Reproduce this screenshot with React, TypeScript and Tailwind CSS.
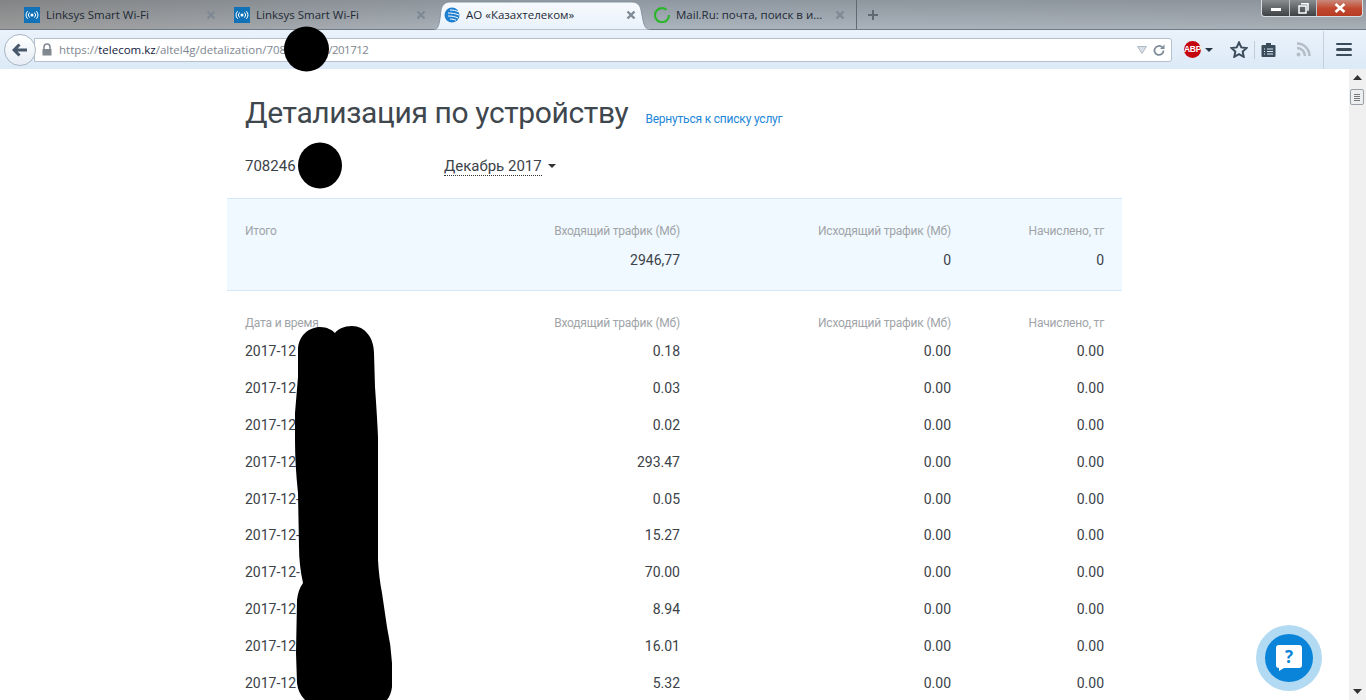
import React from "react";

const X = () => (
  <svg width="10" height="10" viewBox="0 0 10 10" className="shrink-0"><path d="M1.500 1.500l7 7M8.500 1.500l-7 7" stroke="#7f8a96" strokeWidth="2.400" /></svg>
);
const Wifi = () => (
  <svg width="16" height="16" viewBox="0 0 16 16" className="shrink-0">
    <rect width="16" height="16" fill="#1272b8" />
    <circle cx="8" cy="8" r="1.500" fill="#fff" />
    <path d="M5.500 5.500a3.600 3.600 0 0 0 0 5M10.500 5.500a3.600 3.600 0 0 1 0 5M3.600 4.200a6 6 0 0 0 0 7.600M12.400 4.200a6 6 0 0 1 0 7.600" stroke="#fff" fill="none" strokeWidth="1" />
  </svg>
);

function Tab({ icon, title, active, last }: { icon: React.ReactNode; title: string; active?: boolean; last?: boolean }) {
  return (
    <div className={`relative w-[210px] h-[29px] pl-[7px] pr-[11px] flex items-center shrink-0 ${last ? "border-r border-[#5f6a75]" : ""}`}>
      {active && (
        <svg className="absolute left-[-3px] top-0" width="216" height="30" viewBox="0 0 216 30">
          <defs>
            <linearGradient id="tabfill" x1="0" y1="0" x2="0" y2="1">
              <stop offset="0" stopColor="#f7fafd" />
              <stop offset="1" stopColor="#e8f1fb" />
            </linearGradient>
          </defs>
          <path d="M0 30C4 29 5 25 6 18L7 10C8 5 11 2 16 2H198C203 2 206 5 207 10L209 20C210 26 212 29 216 30Z" fill="url(#tabfill)" stroke="#8793a0" strokeWidth="1" />
        </svg>
      )}
      <span className="relative flex items-center gap-[6px] w-full">
        {icon}
        <span className="flex-1 truncate text-[11.500px] text-[#1e2a35]">{title}</span>
        <X />
      </span>
    </div>
  );
}

const cols = "grid grid-cols-[218px_217px_271px_153px]";

function Row({ a, b }: { a: string; b: string }) {
  return (
    <div className={`${cols} h-[36.900px] items-center text-[14px] text-[#3b4248]`}>
      <span>{a}</span>
      <span className="text-right">{b}</span>
      <span className="text-right">0.00</span>
      <span className="text-right">0.00</span>
    </div>
  );
}

function Head({ first }: { first: string }) {
  return (
    <div className={`${cols} text-[12px] tracking-[-0.2px] leading-[18px] text-[#a0a4a8]`}>
      <span>{first}</span>
      <span className="text-right">Входящий трафик (Мб)</span>
      <span className="text-right">Исходящий трафик (Мб)</span>
      <span className="text-right">Начислено, тг</span>
    </div>
  );
}

const rows = [
  ["2017-12", "0.18"], ["2017-12", "0.03"], ["2017-12", "0.02"], ["2017-12", "293.47"], ["2017-12-", "0.05"],
  ["2017-12-", "15.27"], ["2017-12-", "70.00"], ["2017-12", "8.94"], ["2017-12", "16.01"], ["2017-12", "5.32"],
];

export default function App() {
  return (
    <div className="relative w-[1366px] h-[700px] overflow-hidden bg-white font-['Roboto','Open_Sans',sans-serif]">
      {/* tab strip */}
      <div className="relative h-[30px] flex pl-[17px] bg-[linear-gradient(to_bottom,rgba(80,85,90,0.28),rgba(255,255,255,0.04)),linear-gradient(to_right,#969696,#a8b2bc_40%,#a4acb4)] border-b border-[#6f7a85] font-['Open_Sans',sans-serif]">
        <Tab icon={<Wifi />} title="Linksys Smart Wi-Fi" />
        <Tab icon={<Wifi />} title="Linksys Smart Wi-Fi" />
        <Tab
          active
          title="АО «Казахтелеком»"
          icon={
            <svg width="16" height="16" viewBox="0 0 16 16" className="shrink-0">
              <circle cx="8" cy="8" r="7.500" fill="#1f7fd0" />
              <path d="M6 3c3 0 6 .5 9 2M4 6c4 0 7 .5 11 2M4 9c4 0 7 .5 10 2M6 12c2 0 4 .3 6 1.300" stroke="#fff" fill="none" strokeWidth="1" />
            </svg>
          }
        />
        <Tab
          last
          title="Mail.Ru: почта, поиск в ин..."
          icon={
            <svg width="16" height="16" viewBox="0 0 16 16" className="shrink-0">
              <path d="M12.500 2.800A7 7 0 1 0 15 8" stroke="#2db52d" fill="none" strokeWidth="2.200" />
            </svg>
          }
        />
        <div className="w-[32px] flex items-center justify-center">
          <svg width="12" height="12" viewBox="0 0 12 12"><path d="M6 1v10M1 6h10" stroke="#5f6973" strokeWidth="2" /></svg>
        </div>
        {/* window controls */}
        <div className="absolute right-[3px] top-0 h-[17px] w-[102px] flex rounded-b-[4px] border border-t-0 border-[#d8dde2] overflow-hidden">
          <div className="w-[28px] bg-gradient-to-b from-[#8a8d90] to-[#3f4244] flex items-center justify-center border-r border-[#c0c4c8]">
            <div className="w-[10px] h-[3px] bg-white mt-[3px]" />
          </div>
          <div className="w-[27px] bg-gradient-to-b from-[#8a8d90] to-[#3f4244] flex items-center justify-center border-r border-[#c0c4c8]">
            <svg width="11" height="11" viewBox="0 0 11 11"><path d="M3 .8h7v7M1 3h7v7H1z" stroke="#fff" fill="none" strokeWidth="1.500" /></svg>
          </div>
          <div className="flex-1 bg-gradient-to-b from-[#c8887c] via-[#c24a30] to-[#b63b22] flex items-center justify-center">
            <svg width="12" height="10" viewBox="0 0 12 10"><path d="M1.500 1l9 8M10.500 1l-9 8" stroke="#fff" strokeWidth="2.600" /></svg>
          </div>
        </div>
      </div>

      {/* nav bar */}
      <div className="h-[39px] flex items-center bg-gradient-to-b from-[#eaf2fb] to-[#dceaf7] relative pl-[4px] font-['Open_Sans',sans-serif]">
        <div className="w-[32px] h-[32px] rounded-full bg-gradient-to-b from-white to-[#e6edf5] border border-[#a9b6c3] flex items-center justify-center shrink-0 z-10">
          <svg width="16" height="14" viewBox="0 0 16 14"><path d="M7.500 1.500L2 7l5.500 5.500M2.500 7H15" stroke="#46586a" fill="none" strokeWidth="3" /></svg>
        </div>
        <div className="-ml-[2px] w-[1138px] h-[24px] bg-white border border-[#b4c0cd] rounded-r-[3px] flex items-center pl-[6px] pr-[6px] shrink-0">
          <svg width="12" height="13" viewBox="0 0 12 13" className="shrink-0"><path d="M3 6V4a3 3 0 0 1 6 0v2" stroke="#808890" fill="none" strokeWidth="1.500" /><rect x="1.500" y="6" width="9" height="6.500" fill="#808890" /></svg>
          <span className="ml-[6px] text-[11.500px] text-[#7e8790] flex-1">
            https://<span className="text-[#12203a]">telecom.kz</span>/altel4g/detalization/708<span className="inline-block w-[42px]" /><span className="tracking-[-0.5px]">/201712</span>
          </span>
          <svg width="10" height="8" viewBox="0 0 10 8" className="mr-[6px]"><path d="M.500.500h9L5 7.500z" fill="#d8dfe6" stroke="#b0bac4" /></svg>
          <svg width="12" height="12" viewBox="0 0 12 12"><path d="M10.500 6.500a4.500 4.500 0 1 1-1.500-3.400" stroke="#7f8d9b" fill="none" strokeWidth="1.800" /><path d="M11.500.5v4.500H7z" fill="#7f8d9b" /></svg>
        </div>
        <div className="ml-[12px] flex items-center">
          <div className="w-[17px] h-[17px] rounded-full bg-[#c4060e] text-white text-[8.500px] tracking-[-0.3px] font-bold flex items-center justify-center leading-none font-['Liberation_Sans',sans-serif]">ABP</div>
          <svg width="8" height="4" viewBox="0 0 8 4" className="ml-[4px]"><path d="M0 0h8L4 4z" fill="#263645" /></svg>
        </div>
        <svg width="18" height="17" viewBox="0 0 18 17" className="ml-[17px]"><path d="M9 1.500l2.300 4.900 5.200.6-3.800 3.600 1 5.200L9 13.200l-4.700 2.600 1-5.200L1.500 7l5.200-.6z" stroke="#3c4b5a" strokeWidth="2" fill="none" /></svg>
        <div className="w-px h-[18px] bg-[#c0ccd8] ml-[6px]" />
        <svg width="15" height="16" viewBox="0 0 15 16" className="ml-[6px]"><path d="M1.500 3h12a1 1 0 0 1 1 1v10a1 1 0 0 1-1 1h-12a1 1 0 0 1-1-1V4a1 1 0 0 1 1-1zM5 1h5v3H5z" fill="#3c4b5a" /><path d="M3 7h1M3 9.500h1M3 12h1M6 7h6M6 9.500h6M6 12h6" stroke="#dceaf7" /></svg>
        <svg width="15" height="15" viewBox="0 0 15 15" className="ml-[20px]"><circle cx="2.500" cy="12.500" r="2" fill="#b4bdc6" /><path d="M1 6a8 8 0 0 1 8 8M1 1.500a12.500 12.500 0 0 1 12.500 12.500" stroke="#b4bdc6" fill="none" strokeWidth="2.500" /></svg>
        <div className="w-px h-[38px] bg-[#c4d0dc] ml-[12px]" />
        <div className="ml-[12px] w-[16px] flex flex-col gap-[3px]">
          <div className="h-[2.500px] bg-[#3c4b5a] rounded-sm" />
          <div className="h-[2.500px] bg-[#3c4b5a] rounded-sm" />
          <div className="h-[2.500px] bg-[#3c4b5a] rounded-sm" />
        </div>
      </div>

      {/* viewport */}
      <div className="flex h-[631px]">
        <div className="flex-1 overflow-hidden pl-[227px]">
          <div className="w-[895px]">
            <div className="px-[18px] pt-[24px] flex items-baseline">
              <h1 className="text-[30px] tracking-[-0.37px] leading-[40px] text-[#3f474e]">Детализация по устройству</h1>
              <a className="ml-[17px] text-[12px] tracking-[-0.2px] text-[#1d86d8]">Вернуться к списку услуг</a>
            </div>
            <div className="px-[18px] mt-[20px] h-[26px] flex items-center text-[15px] text-[#3b4248]">
              <span className="w-[199px]">708246</span>
              <span className="border-b border-dotted border-[#333] leading-[18px]">Декабрь 2017</span>
              <svg width="8" height="4" viewBox="0 0 8 4" className="ml-[6px]"><path d="M0 0h8L4 4z" fill="#333" /></svg>
            </div>
            <div className="mt-[19px] h-[93px] bg-[#f0f9ff] border-y border-[#d3e9fb] px-[18px] pt-[23px]">
              <Head first="Итого" />
              <div className={`${cols} mt-[11px] text-[14px] leading-[18px] text-[#3b4248]`}>
                <span />
                <span className="text-right">2946,77</span>
                <span className="text-right">0</span>
                <span className="text-right">0</span>
              </div>
            </div>
            <div className="px-[18px] pt-[23px]">
              <Head first="Дата и время" />
              <div className="mt-[1px]">
                {rows.map((r, i) => (
                  <Row key={i} a={r[0]} b={r[1]} />
                ))}
              </div>
            </div>
          </div>
        </div>
        {/* scrollbar */}
        <div className="w-[17px] shrink-0 bg-[#f0f0f0] flex flex-col items-center justify-between relative">
          <div className="h-[17px] flex items-center"><svg width="9" height="5" viewBox="0 0 9 5"><path d="M4.500 0l4.500 5H0z" fill="#333" /></svg></div>
          <div className="absolute top-[20px] left-[1px] w-[14px] h-[16px] bg-[#eceef0] border border-[#9aa0a6] rounded-[2px] flex flex-col justify-center gap-[1px] px-[3px]">
            <div className="h-px bg-[#777]" /><div className="h-px bg-[#777]" /><div className="h-px bg-[#777]" /><div className="h-px bg-[#777]" />
          </div>
          <div className="h-[17px] flex items-center"><svg width="9" height="5" viewBox="0 0 9 5"><path d="M0 0h9L4.500 5z" fill="#333" /></svg></div>
        </div>
      </div>

      {/* redaction marks */}
      <svg className="absolute left-0 top-0 pointer-events-none" width="1366" height="700" viewBox="0 0 1366 700">
        <circle cx="306.500" cy="49" r="22.500" fill="#000" />
        <ellipse cx="320" cy="165.500" rx="22" ry="23" fill="#000" />
        <path d="M298 350C298 336 309 327 320 327C327 327 332 330 335 333C338 329 344 326 352 326C365 326 374 338 374 353L375 387Q377 415 378 437L378 520L378 560Q379 578 382 593L387 627Q391 645 392 663L392 687Q391 695 387 700H305Q298 693 297 683L296 653L297 600Q298 590 303 583Q299 565 299 547L298 493Q295 465 295 440L295 413L298 377Z" fill="#000" />
      </svg>

      {/* help button */}
      <div className="absolute left-[1256px] top-[625px] w-[66px] h-[66px] rounded-full bg-[#b3daf3] flex items-center justify-center">
        <div className="w-[48px] h-[48px] rounded-full bg-[#0a84d8] flex items-center justify-center">
          <svg width="28" height="28" viewBox="0 0 28 28">
            <path d="M4 1h20a3 3 0 0 1 3 3v17a3 3 0 0 1-3 3H9l-5 3 .0-3a3 3 0 0 1-3-3V4a3 3 0 0 1 3-3z" fill="#fff" />
            <text x="14" y="19" textAnchor="middle" fontSize="17" fontWeight="700" fill="#0a84d8" fontFamily="Open Sans">?</text>
          </svg>
        </div>
      </div>
    </div>
  );
}
